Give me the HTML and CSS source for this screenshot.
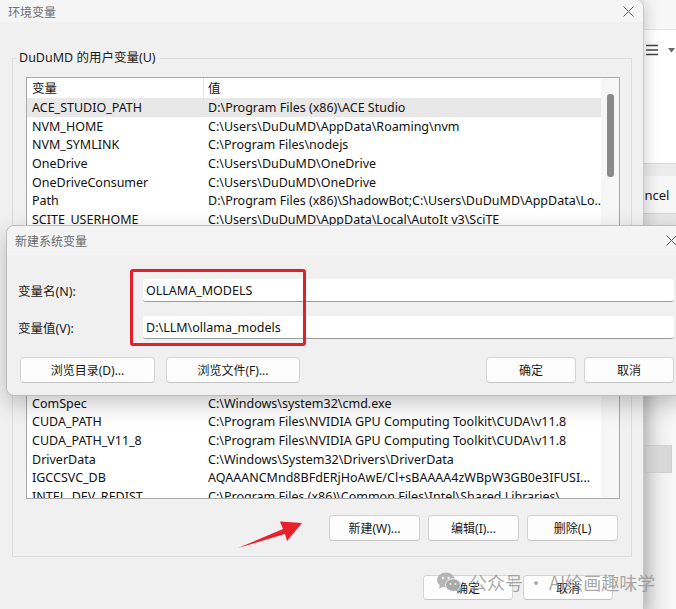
FILE: index.html
```html
<!DOCTYPE html>
<html lang="zh-CN">
<head>
  <meta charset="UTF-8">
  <title>环境变量</title>
  <link rel="stylesheet" href="styles.css">
</head>
<body>
  <div class="desk">
    <div class="envwin">
      <div class="titlebar">
        <span class="title">环境变量</span>
        <svg class="xbtn" width="11" height="11" viewBox="0 0 11 11"><path d="M0.5 0.5L10.5 10.5M10.5 0.5L0.5 10.5" stroke="#5c5c5c" stroke-width="1"/></svg>
      </div>
      <div class="envbody">
        <fieldset class="group user">
          <legend>DuDuMD 的用户变量(U)</legend>
          <div class="list">
            <div class="rows">
              <div class="row head"><span class="c1">变量</span><span class="c2">值</span></div>
              <div class="row sel"><span class="c1">ACE_STUDIO_PATH</span><span class="c2">D:\Program Files (x86)\ACE Studio</span></div>
              <div class="row"><span class="c1">NVM_HOME</span><span class="c2">C:\Users\DuDuMD\AppData\Roaming\nvm</span></div>
              <div class="row"><span class="c1">NVM_SYMLINK</span><span class="c2">C:\Program Files\nodejs</span></div>
              <div class="row"><span class="c1">OneDrive</span><span class="c2">C:\Users\DuDuMD\OneDrive</span></div>
              <div class="row"><span class="c1">OneDriveConsumer</span><span class="c2">C:\Users\DuDuMD\OneDrive</span></div>
              <div class="row"><span class="c1">Path</span><span class="c2">D:\Program Files (x86)\ShadowBot;C:\Users\DuDuMD\AppData\Lo...</span></div>
              <div class="row"><span class="c1">SCITE_USERHOME</span><span class="c2">C:\Users\DuDuMD\AppData\Local\AutoIt v3\SciTE</span></div>
              <div class="row"><span class="c1">TEMP</span><span class="c2">C:\Users\DuDuMD\AppData\Local\Temp</span></div>
              <div class="row"><span class="c1">TMP</span><span class="c2">C:\Users\DuDuMD\AppData\Local\Temp</span></div>
            </div>
            <div class="vscroll"><div class="thumb"></div></div>
          </div>
          <div class="btnrow">
            <button class="btn">新建(N)...</button>
            <button class="btn">编辑(E)...</button>
            <button class="btn">删除(D)</button>
          </div>
        </fieldset>

        <fieldset class="group sys">
          <legend>系统变量(S)</legend>
          <div class="list">
            <div class="rows">
              <div class="row head"><span class="c1">变量</span><span class="c2">值</span></div>
              <div class="row"><span class="c1">ACSetupSvcPort</span><span class="c2">23210</span></div>
              <div class="row"><span class="c1">ACSvcPort</span><span class="c2">17532</span></div>
              <div class="row"><span class="c1">ComSpec</span><span class="c2">C:\Windows\system32\cmd.exe</span></div>
              <div class="row"><span class="c1">CUDA_PATH</span><span class="c2">C:\Program Files\NVIDIA GPU Computing Toolkit\CUDA\v11.8</span></div>
              <div class="row"><span class="c1">CUDA_PATH_V11_8</span><span class="c2">C:\Program Files\NVIDIA GPU Computing Toolkit\CUDA\v11.8</span></div>
              <div class="row"><span class="c1">DriverData</span><span class="c2">C:\Windows\System32\Drivers\DriverData</span></div>
              <div class="row"><span class="c1">IGCCSVC_DB</span><span class="c2">AQAAANCMnd8BFdERjHoAwE/Cl+sBAAAA4zWBpW3GB0e3IFUSI...</span></div>
              <div class="row"><span class="c1">INTEL_DEV_REDIST</span><span class="c2">C:\Program Files (x86)\Common Files\Intel\Shared Libraries\</span></div>
            </div>
            <div class="vscroll"></div>
          </div>
          <div class="btnrow">
            <button class="btn">新建(W)...</button>
            <button class="btn">编辑(I)...</button>
            <button class="btn">删除(L)</button>
          </div>
        </fieldset>

        <div class="btnrow bottom">
          <button class="btn">确定</button>
          <button class="btn">取消</button>
        </div>
      </div>
    </div>

    <!-- window behind, only a strip shows -->
    <div class="behind">
      <div class="bh-top"></div>
      <div class="bh-tool">
        <svg class="numlist" width="20" height="14" viewBox="0 0 20 14"><text x="0" y="6" font-size="6" font-family="Noto Sans" fill="#444">1</text><text x="0" y="13" font-size="6" font-family="Noto Sans" fill="#444">2</text><path d="M5 2.5H17M5 7H17M5 11.5H17" stroke="#444" stroke-width="1.3"/></svg>
        <svg class="caret" width="7" height="5" viewBox="0 0 7 5"><path d="M0 0H7L3.5 4.5Z" fill="#666"/></svg>
      </div>
      <div class="bh-band"></div>
      <div class="bh-cancel"><span>Cancel</span></div>
      <div class="bh-band2"></div>
      <div class="bh-hidden"></div>
      <div class="bh-low"><div class="bh-box"></div></div>
    </div>

    <div class="newvar">
      <div class="nv-title">
        <span>新建系统变量</span>
        <svg width="11" height="11" viewBox="0 0 11 11"><path d="M0.5 0.5L10.5 10.5M10.5 0.5L0.5 10.5" stroke="#5c5c5c" stroke-width="1"/></svg>
      </div>
      <div class="nv-form">
        <label for="vname">变量名(N):</label>
        <input id="vname" class="field" type="text" value="OLLAMA_MODELS">
        <label for="vvalue">变量值(V):</label>
        <input id="vvalue" class="field" type="text" value="D:\LLM\ollama_models">
      </div>
      <div class="nv-btns">
        <button class="btn wide">浏览目录(D)...</button>
        <button class="btn wide">浏览文件(F)...</button>
        <span class="spacer"></span>
        <button class="btn">确定</button>
        <button class="btn">取消</button>
      </div>
      <div class="mark"></div>
    </div>

    <svg class="arrow" width="72" height="34" viewBox="0 0 72 34">
      <path d="M2 30L47 11L44 3.5L66 5L51 23L49 16Z" fill="#e8202b"/>
    </svg>

    <div class="watermark">
      <svg width="24" height="21" viewBox="0 0 24 21">
        <ellipse cx="9" cy="8" rx="9" ry="7.5" fill="#b5b5b5"/>
        <path d="M3 13L2 17L7 14Z" fill="#b5b5b5"/>
        <ellipse cx="16" cy="13" rx="7.5" ry="6.3" fill="#a9a9a9" stroke="#f0f0f0" stroke-width="1"/>
        <path d="M20 17L22 20L17 18Z" fill="#a9a9a9"/>
        <circle cx="6" cy="6" r="1.2" fill="#f0f0f0"/>
        <circle cx="11.5" cy="6" r="1.2" fill="#f0f0f0"/>
        <circle cx="13.5" cy="12" r="1" fill="#f0f0f0"/>
        <circle cx="18.5" cy="12" r="1" fill="#f0f0f0"/>
      </svg>
      <span>公众号 · AI绘画趣味学</span>
    </div>
  </div>
</body>
</html>
```

FILE: styles.css
```css
body {
  margin: 0;
  width: 676px;
  height: 609px;
  overflow: hidden;
  font-family: "Noto Sans", "Noto Sans CJK SC", sans-serif;
  font-size: 12.5px;
  color: #1a1a1a;
  background: #f0f0f0;
}

.desk {
  position: relative;
  display: flex;
  height: 609px;
}

/* main window */
.envwin {
  position: relative;
  z-index: 1;
  flex: none;
  width: 644px;
  box-sizing: border-box;
  background: #f0f0f0;
  border-right: 1px solid #c8c8c8;
  border-top-right-radius: 8px;
  box-shadow: 3px 0 14px rgba(0, 0, 0, 0.16);
}

.titlebar {
  height: 22px;
  display: flex;
  align-items: center;
  justify-content: space-between;
  padding: 0 9px 0 8px;
  background: #f5f5f5;
  border-top-right-radius: 8px;
}

.title {
  font-family: "Noto Sans CJK SC", sans-serif;
  font-size: 12px;
  color: #6e6e6e;
}

.envbody {
  padding: 28px 11px 0 12px;
}

.group {
  margin: 0;
  border: 1px solid #dcdcdc;
  padding: 11px 11px 15px 13px;
  min-width: 0;
}

.group legend {
  margin-left: -10px;
  padding: 0 3px;
  height: 16px;
  line-height: 16px;
}

.group.sys {
  margin-top: 6.33px;
  padding-top: 10px;
}

.list {
  display: flex;
  border: 1px solid #a9a9a9;
  background: #fff;
  overflow: hidden;
  box-sizing: border-box;
}

.user .list {
  height: 168px;
}

.sys .list {
  height: 164px;
}

.rows {
  flex: 1;
  min-width: 0;
}

.row {
  display: flex;
  height: 18.67px;
  line-height: 18.67px;
  white-space: nowrap;
  color: #111;
}

.row span {
  padding-top: 1px;
}

.row.head {
  height: 20px;
  line-height: 20px;
}

.row.sel {
  background: #e8e8e8;
}

.c1 {
  flex: none;
  width: 177px;
  padding-left: 5px;
  box-sizing: border-box;
  overflow: hidden;
}

.head .c1 {
  border-right: 1px solid #e3e3e3;
}

.c2 {
  flex: 1;
  padding-left: 4px;
  overflow: hidden;
}

.vscroll {
  flex: none;
  width: 18px;
  background: #f6f6f6;
}

.thumb {
  margin: 16px 0 0 6px;
  width: 7px;
  height: 83px;
  background: #8a8a8a;
  border-radius: 3px;
}

.btnrow {
  display: flex;
  justify-content: flex-end;
  gap: 8px;
  margin-top: 16px;
  padding-right: 2px;
}

.btnrow.bottom {
  margin-top: 18px;
  padding-right: 19px;
  gap: 10px;
}

.btn {
  width: 91px;
  height: 26px;
  padding: 0;
  background: #fdfdfd;
  border: 1px solid #d3d3d3;
  border-bottom-color: #c4c4c4;
  border-radius: 4px;
  font-family: "Noto Sans", "Noto Sans CJK SC", sans-serif;
  font-size: 12px;
  color: #1a1a1a;
}

.btnrow.bottom .btn {
  width: 90px;
  height: 25px;
}

/* strip of the window behind */
.behind {
  flex: 1;
  display: flex;
  flex-direction: column;
  overflow: hidden;
  background: #fff;
}

.bh-top {
  height: 29px;
  background: #f7f7f7;
  border-bottom: 1px solid #e2e2e2;
}

.bh-tool {
  height: 133px;
  display: flex;
  align-items: flex-start;
  gap: 7px;
  padding-top: 13px;
  box-sizing: border-box;
  background: #fff;
}

.bh-tool .numlist {
  margin-left: -3px;
}

.bh-tool .caret {
  margin-top: 5px;
}

.bh-band {
  height: 13px;
  background: #ececec;
  border-top: 1px solid #d8d8d8;
  box-sizing: border-box;
}

.bh-cancel {
  height: 37px;
  line-height: 38px;
  background: #f6f6f6;
  font-size: 13px;
  white-space: nowrap;
}

.bh-cancel span {
  margin-left: -15px;
}

.bh-band2 {
  height: 13px;
  background: #e7e7e7;
  border-top: 1px solid #d6d6d6;
  box-sizing: border-box;
}

.bh-hidden {
  height: 170px;
}

.bh-low {
  flex: 1;
  background: linear-gradient(90deg, #d6d6d6, #efefef 55%, #f9f9f9);
  padding-top: 49px;
}

.bh-box {
  width: 27px;
  height: 28px;
  margin-left: 1px;
  background: #d8d8d8;
  border: 1px solid #cfcfcf;
  box-sizing: border-box;
}

/* new variable dialog */
.newvar {
  position: absolute;
  z-index: 3;
  left: 6px;
  top: 225px;
  width: 680px;
  height: 171px;
  box-sizing: border-box;
  background: #f0f0f0;
  border: 1px solid #bcbcbc;
  border-radius: 8px 0 0 8px;
  box-shadow: 0 8px 22px rgba(0, 0, 0, 0.22);
}

.nv-title {
  height: 29px;
  display: flex;
  align-items: center;
  justify-content: space-between;
  padding: 0 8px 0 8px;
  background: #f4f4f4;
  border-radius: 8px 0 0 0;
  font-family: "Noto Sans CJK SC", sans-serif;
  font-size: 12px;
  color: #6a6a6a;
}

.nv-form {
  display: grid;
  grid-template-columns: 125px 1fr;
  grid-auto-rows: 23px;
  row-gap: 14px;
  align-items: center;
  padding: 24px 11px 0 11px;
}

.nv-form label {
  font-size: 12.5px;
  color: #1a1a1a;
}

.field {
  height: 23px;
  box-sizing: border-box;
  border: none;
  border-bottom: 1px solid #9a9a9a;
  border-radius: 3px;
  padding: 0 3px;
  background: #fff;
  font-family: "Noto Sans", "Noto Sans CJK SC", sans-serif;
  font-size: 12.5px;
  color: #111;
  outline: none;
}

.nv-btns {
  display: flex;
  gap: 8px;
  margin-top: 18px;
  padding: 0 11px 0 13px;
}

.nv-btns .btn {
  width: 90px;
}

.nv-btns .btn.wide {
  width: 135px;
}

.nv-btns .btn.wide + .btn.wide {
  margin-left: 3px;
  width: 134px;
}

.spacer {
  flex: 1;
}

.mark {
  position: absolute;
  left: 123px;
  top: 43px;
  width: 176px;
  height: 77px;
  box-sizing: border-box;
  border: 3px solid #e41e2b;
  border-radius: 3px;
}

.arrow {
  position: absolute;
  z-index: 3;
  left: 236px;
  top: 518px;
}

.watermark {
  position: absolute;
  z-index: 4;
  left: 437px;
  top: 571px;
  display: flex;
  align-items: center;
  gap: 8px;
  font-family: "Noto Sans CJK SC", sans-serif;
  font-size: 18px;
  line-height: 22px;
  color: rgba(140, 140, 140, 0.75);
}
```
